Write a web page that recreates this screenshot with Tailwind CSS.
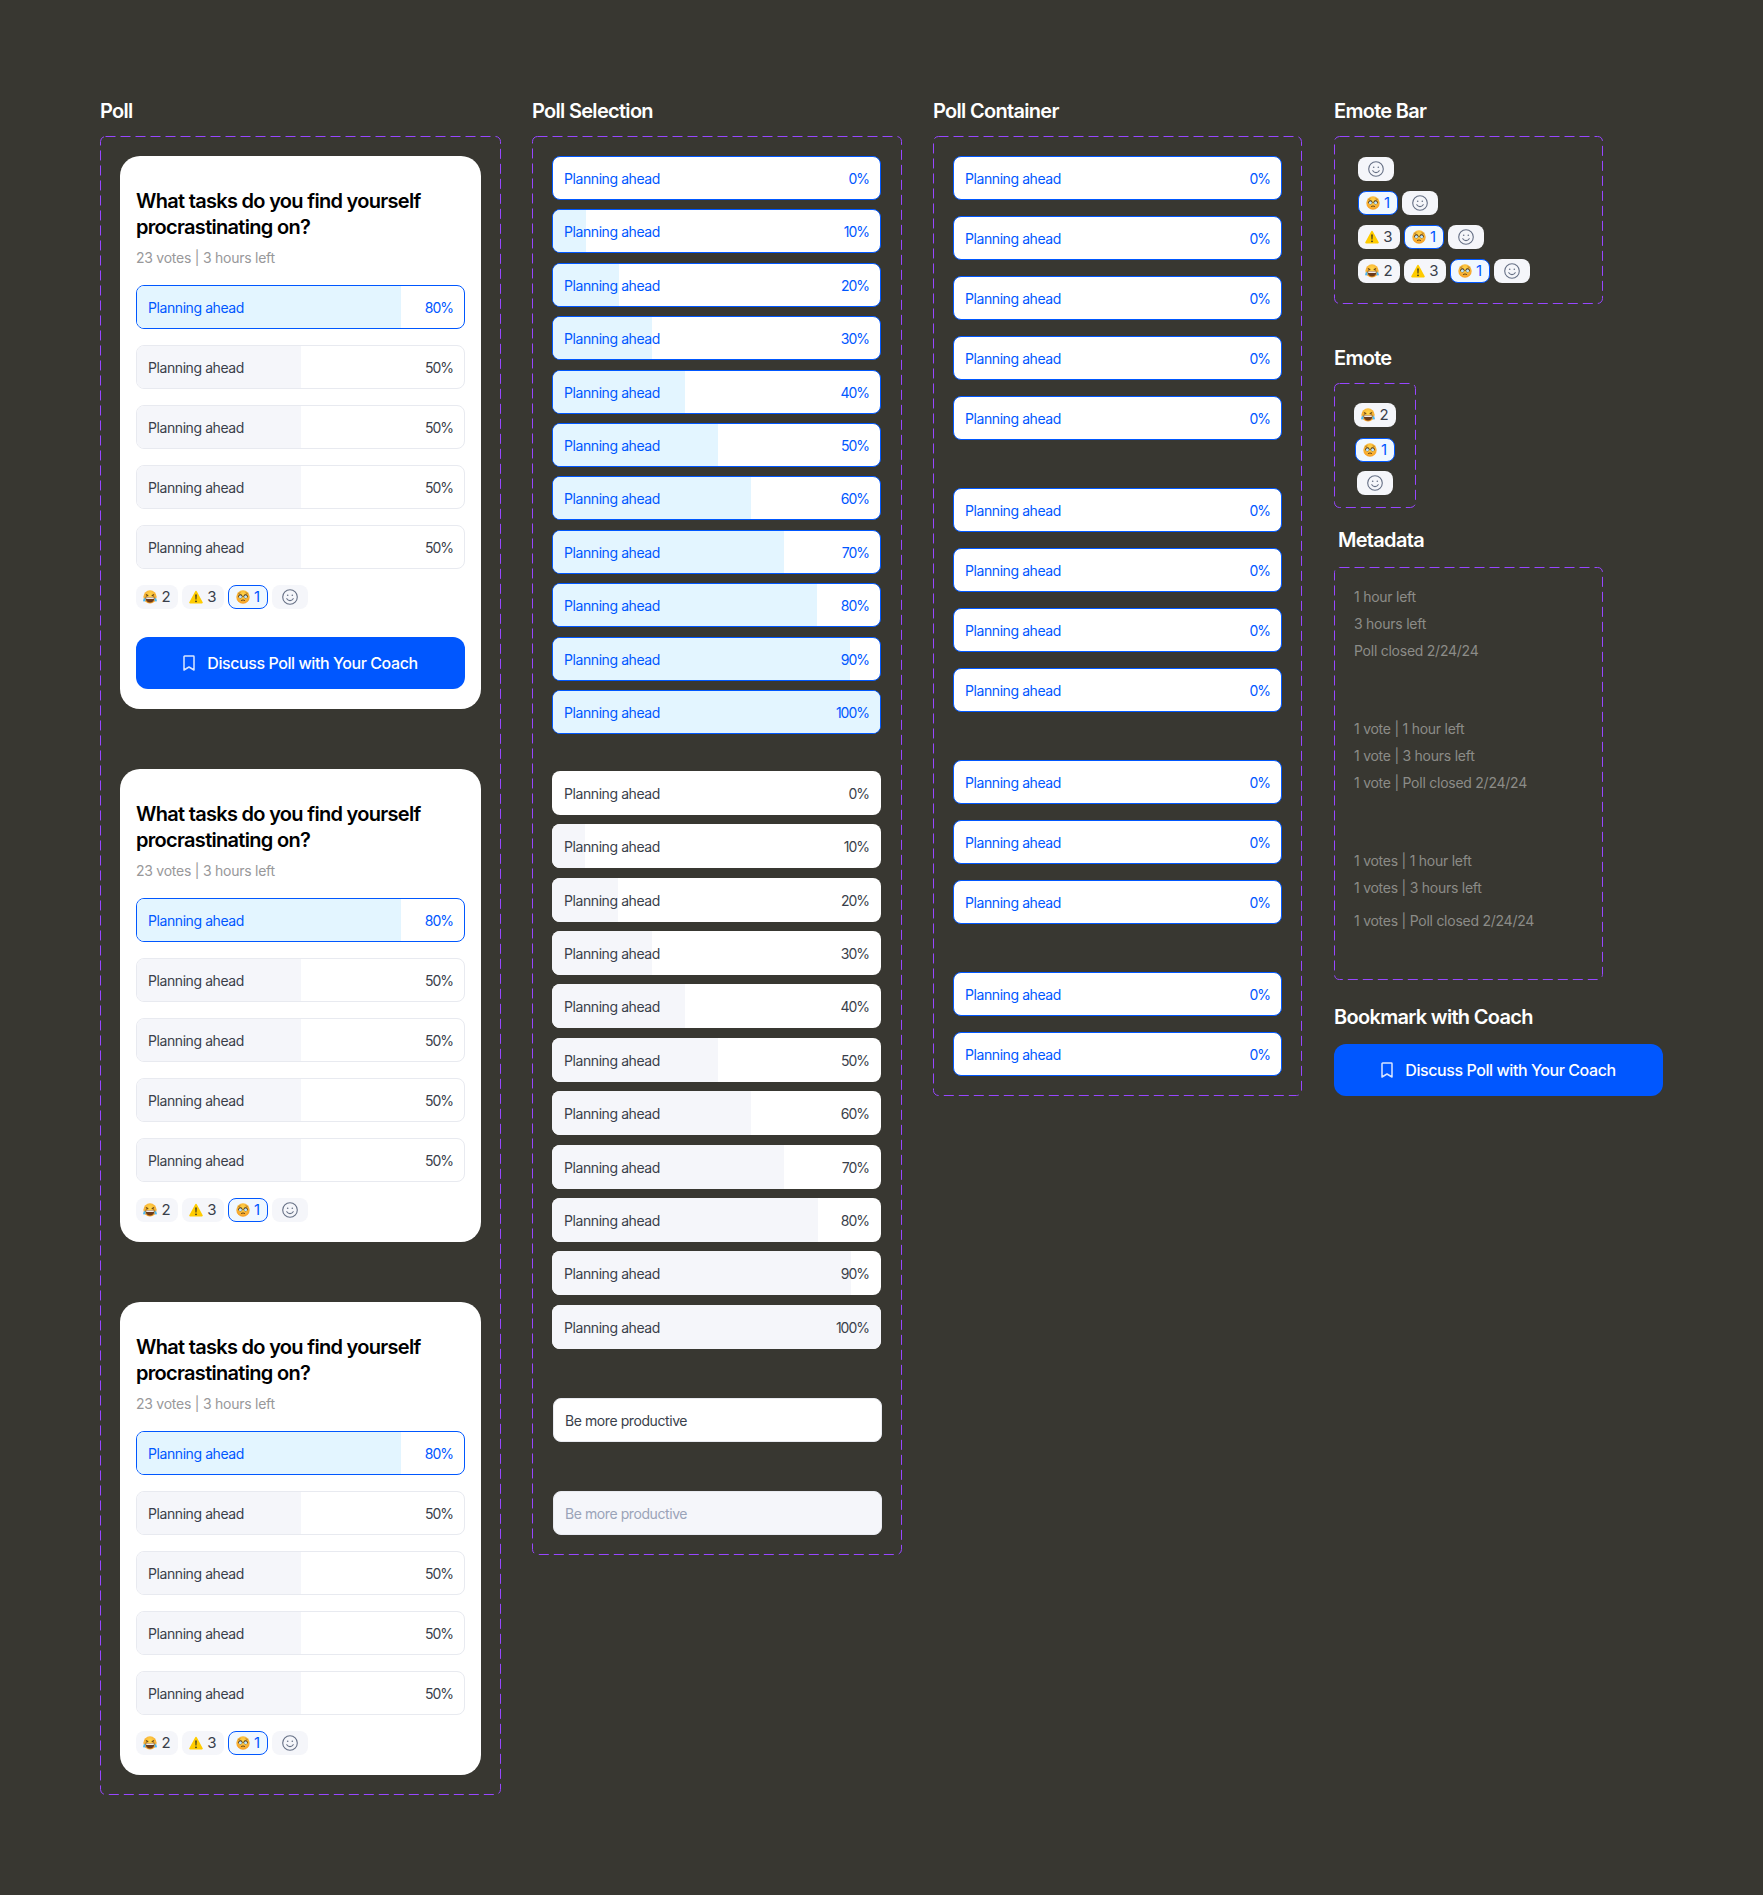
<!DOCTYPE html>
<html><head><meta charset="utf-8"><script src="https://cdn.jsdelivr.net/npm/@tailwindcss/browser@4"></script></head>
<body class="m-0 bg-[#383731]">
<svg class="absolute w-0 h-0"><defs>
<radialGradient id="g" cx="50%" cy="35%" r="70%"><stop offset="0" stop-color="#ffd84d"/><stop offset="1" stop-color="#f59a23"/></radialGradient>
<symbol id="laugh" viewBox="0 0 14 14"><circle cx="7" cy="6.800" r="6.600" fill="url(#g)"/><path d="M2.800 4.400l2.400 1.100-2.400.7M11.200 4.400L8.800 5.500l2.400.7" stroke="#5b3a12" stroke-width=".9" fill="none"/><path d="M2.500 7.300h9c0 3.300-2 5.300-4.500 5.300s-4.500-2-4.500-5.300z" fill="#6b3a1a"/><path d="M3.200 7.500h7.600v1.400H3.200z" fill="#fff"/><path d="M1.700 7.500c-.8 1.300-1.900 2.300-1.500 3.400.4.900 2 .8 2.400-.3.300-1-.4-2-.9-3.100zM12.300 7.500c.8 1.300 1.900 2.300 1.500 3.400-.4.900-2 .8-2.400-.3-.3-1 .4-2 .9-3.100z" fill="#4fb7f0"/></symbol>
<symbol id="warn" viewBox="0 0 14 14"><path d="M7 .8c.4 0 .7.200.9.600l5.800 10.800c.3.600-.1 1.200-.8 1.200H1.100c-.7 0-1.100-.6-.8-1.200L6.100 1.400c.2-.4.500-.6.900-.6z" fill="#ffcc00"/><path d="M6.200 4.400h1.600l-.3 5.200H6.500z" fill="#3a3320"/><circle cx="7" cy="11.300" r=".9" fill="#3a3320"/></symbol>
<symbol id="tear" viewBox="0 0 14 14"><circle cx="7" cy="7" r="6.700" fill="url(#g)"/><circle cx="4.400" cy="6.300" r="2.100" fill="#4a2f14"/><circle cx="9.600" cy="6.300" r="2.100" fill="#4a2f14"/><circle cx="4.400" cy="6.800" r="1.500" fill="#bfe6f7"/><circle cx="9.600" cy="6.800" r="1.500" fill="#bfe6f7"/><path d="M2.400 3.600l2-.8M11.600 3.600l-2-.8" stroke="#8a5a1e" stroke-width=".7"/><path d="M5 10.700c1.200-.9 2.800-.9 4 0" stroke="#5b3a12" stroke-width=".9" fill="none"/></symbol>
<symbol id="smile" viewBox="0 0 16 16"><g fill="none" stroke="#667085" stroke-width="1.100" stroke-linecap="round"><circle cx="8" cy="8" r="7.300"/><path d="M4.800 9.700c.8 1.300 1.900 1.900 3.200 1.900s2.400-.6 3.200-1.900"/></g><circle cx="5.700" cy="6.200" r=".8" fill="#667085"/><circle cx="10.300" cy="6.200" r=".8" fill="#667085"/></symbol>
<symbol id="mark" viewBox="0 0 12 16"><path d="M1 1.700C1 1.300 1.300 1 1.700 1h8.600c.4 0 .7.300.7.700V15l-5-3-5 3z" fill="none" stroke="#fff" stroke-opacity=".85" stroke-width="1.500" stroke-linejoin="round"/></symbol>
</defs></svg>

<main class="flex items-start gap-[31px] h-[1895px] pl-[100px] pt-[99px] font-['Inter',sans-serif]">

<!-- Poll -->
<section class="w-[401px] shrink-0">
<h2 class="h-6 mb-[13px] text-[20px] leading-6 font-semibold tracking-[-0.7px] text-white">Poll</h2>
<div class="relative flex flex-col gap-[60px] p-5 h-[1659px]">
<svg class="absolute inset-0 w-full h-full"><rect x=".5" y=".5" rx="5" class="w-[calc(100%-1px)] h-[calc(100%-1px)] fill-none stroke-[#9747ff] [stroke-dasharray:10_5]"/></svg>

<article class="relative rounded-[20px] bg-white px-4 pt-8 pb-5">
<h3 class="text-[20px] leading-[26px] font-semibold tracking-[-0.7px] text-black">What tasks do you find yourself procrastinating on?</h3>
<p class="mt-2 mb-[17px] text-sm leading-5 tracking-[-0.25px] text-[#98989a]">23 votes | 3 hours left</p>
<div class="flex flex-col gap-4 text-sm tracking-[-0.42px] [&>div]:pt-0.5 [&_span:last-child]:tracking-[-1px]">
<div class="relative flex h-11 items-center justify-between overflow-hidden rounded-lg border border-[#0057ff] bg-white px-[11px] text-[#0057ff]"><div class="absolute inset-y-0 left-0 bg-[#e3f5ff]" style="width:80.7%"></div><span class="relative">Planning ahead</span><span class="relative">80%</span></div>
<div class="relative flex h-11 items-center justify-between overflow-hidden rounded-lg border border-[#e8eaf0] bg-white px-[11px] text-[#3a3f4b]"><div class="absolute inset-y-0 left-0 bg-[#f5f6fa]" style="width:50.2%"></div><span class="relative">Planning ahead</span><span class="relative">50%</span></div>
<div class="relative flex h-11 items-center justify-between overflow-hidden rounded-lg border border-[#e8eaf0] bg-white px-[11px] text-[#3a3f4b]"><div class="absolute inset-y-0 left-0 bg-[#f5f6fa]" style="width:50.2%"></div><span class="relative">Planning ahead</span><span class="relative">50%</span></div>
<div class="relative flex h-11 items-center justify-between overflow-hidden rounded-lg border border-[#e8eaf0] bg-white px-[11px] text-[#3a3f4b]"><div class="absolute inset-y-0 left-0 bg-[#f5f6fa]" style="width:50.2%"></div><span class="relative">Planning ahead</span><span class="relative">50%</span></div>
<div class="relative flex h-11 items-center justify-between overflow-hidden rounded-lg border border-[#e8eaf0] bg-white px-[11px] text-[#3a3f4b]"><div class="absolute inset-y-0 left-0 bg-[#f5f6fa]" style="width:50.2%"></div><span class="relative">Planning ahead</span><span class="relative">50%</span></div>
</div>
<div class="mt-4 flex gap-1 text-[15px]">
<span class="flex h-6 w-[42px] items-center justify-center gap-1 rounded-lg bg-[#f5f6fa] text-[#3a3f4b]"><svg class="size-[14px]"><use href="#laugh"/></svg>2</span>
<span class="flex h-6 w-[42px] items-center justify-center gap-1 rounded-lg bg-[#f5f6fa] text-[#3a3f4b]"><svg class="size-[14px]"><use href="#warn"/></svg>3</span>
<span class="flex h-6 w-10 items-center justify-center gap-1 rounded-lg border border-[#0057ff] bg-[#f0f8ff] text-[#0057ff]"><svg class="size-[14px]"><use href="#tear"/></svg>1</span>
<span class="flex h-6 w-9 items-center justify-center rounded-lg bg-[#f5f6fa]"><svg class="size-4"><use href="#smile"/></svg></span>
</div>
<button class="mt-7 flex h-[52px] w-full items-center justify-center gap-3 rounded-xl bg-[#0057ff] text-base font-medium tracking-[-0.43px] text-white"><svg class="h-4 w-3"><use href="#mark"/></svg>Discuss Poll with Your Coach</button>
</article>

<article class="relative rounded-[20px] bg-white px-4 pt-8 pb-5">
<h3 class="text-[20px] leading-[26px] font-semibold tracking-[-0.7px] text-black">What tasks do you find yourself procrastinating on?</h3>
<p class="mt-2 mb-[17px] text-sm leading-5 tracking-[-0.25px] text-[#98989a]">23 votes | 3 hours left</p>
<div class="flex flex-col gap-4 text-sm tracking-[-0.42px] [&>div]:pt-0.5 [&_span:last-child]:tracking-[-1px]">
<div class="relative flex h-11 items-center justify-between overflow-hidden rounded-lg border border-[#0057ff] bg-white px-[11px] text-[#0057ff]"><div class="absolute inset-y-0 left-0 bg-[#e3f5ff]" style="width:80.7%"></div><span class="relative">Planning ahead</span><span class="relative">80%</span></div>
<div class="relative flex h-11 items-center justify-between overflow-hidden rounded-lg border border-[#e8eaf0] bg-white px-[11px] text-[#3a3f4b]"><div class="absolute inset-y-0 left-0 bg-[#f5f6fa]" style="width:50.2%"></div><span class="relative">Planning ahead</span><span class="relative">50%</span></div>
<div class="relative flex h-11 items-center justify-between overflow-hidden rounded-lg border border-[#e8eaf0] bg-white px-[11px] text-[#3a3f4b]"><div class="absolute inset-y-0 left-0 bg-[#f5f6fa]" style="width:50.2%"></div><span class="relative">Planning ahead</span><span class="relative">50%</span></div>
<div class="relative flex h-11 items-center justify-between overflow-hidden rounded-lg border border-[#e8eaf0] bg-white px-[11px] text-[#3a3f4b]"><div class="absolute inset-y-0 left-0 bg-[#f5f6fa]" style="width:50.2%"></div><span class="relative">Planning ahead</span><span class="relative">50%</span></div>
<div class="relative flex h-11 items-center justify-between overflow-hidden rounded-lg border border-[#e8eaf0] bg-white px-[11px] text-[#3a3f4b]"><div class="absolute inset-y-0 left-0 bg-[#f5f6fa]" style="width:50.2%"></div><span class="relative">Planning ahead</span><span class="relative">50%</span></div>
</div>
<div class="mt-4 flex gap-1 text-[15px]">
<span class="flex h-6 w-[42px] items-center justify-center gap-1 rounded-lg bg-[#f5f6fa] text-[#3a3f4b]"><svg class="size-[14px]"><use href="#laugh"/></svg>2</span>
<span class="flex h-6 w-[42px] items-center justify-center gap-1 rounded-lg bg-[#f5f6fa] text-[#3a3f4b]"><svg class="size-[14px]"><use href="#warn"/></svg>3</span>
<span class="flex h-6 w-10 items-center justify-center gap-1 rounded-lg border border-[#0057ff] bg-[#f0f8ff] text-[#0057ff]"><svg class="size-[14px]"><use href="#tear"/></svg>1</span>
<span class="flex h-6 w-9 items-center justify-center rounded-lg bg-[#f5f6fa]"><svg class="size-4"><use href="#smile"/></svg></span>
</div>
</article>

<article class="relative rounded-[20px] bg-white px-4 pt-8 pb-5">
<h3 class="text-[20px] leading-[26px] font-semibold tracking-[-0.7px] text-black">What tasks do you find yourself procrastinating on?</h3>
<p class="mt-2 mb-[17px] text-sm leading-5 tracking-[-0.25px] text-[#98989a]">23 votes | 3 hours left</p>
<div class="flex flex-col gap-4 text-sm tracking-[-0.42px] [&>div]:pt-0.5 [&_span:last-child]:tracking-[-1px]">
<div class="relative flex h-11 items-center justify-between overflow-hidden rounded-lg border border-[#0057ff] bg-white px-[11px] text-[#0057ff]"><div class="absolute inset-y-0 left-0 bg-[#e3f5ff]" style="width:80.7%"></div><span class="relative">Planning ahead</span><span class="relative">80%</span></div>
<div class="relative flex h-11 items-center justify-between overflow-hidden rounded-lg border border-[#e8eaf0] bg-white px-[11px] text-[#3a3f4b]"><div class="absolute inset-y-0 left-0 bg-[#f5f6fa]" style="width:50.2%"></div><span class="relative">Planning ahead</span><span class="relative">50%</span></div>
<div class="relative flex h-11 items-center justify-between overflow-hidden rounded-lg border border-[#e8eaf0] bg-white px-[11px] text-[#3a3f4b]"><div class="absolute inset-y-0 left-0 bg-[#f5f6fa]" style="width:50.2%"></div><span class="relative">Planning ahead</span><span class="relative">50%</span></div>
<div class="relative flex h-11 items-center justify-between overflow-hidden rounded-lg border border-[#e8eaf0] bg-white px-[11px] text-[#3a3f4b]"><div class="absolute inset-y-0 left-0 bg-[#f5f6fa]" style="width:50.2%"></div><span class="relative">Planning ahead</span><span class="relative">50%</span></div>
<div class="relative flex h-11 items-center justify-between overflow-hidden rounded-lg border border-[#e8eaf0] bg-white px-[11px] text-[#3a3f4b]"><div class="absolute inset-y-0 left-0 bg-[#f5f6fa]" style="width:50.2%"></div><span class="relative">Planning ahead</span><span class="relative">50%</span></div>
</div>
<div class="mt-4 flex gap-1 text-[15px]">
<span class="flex h-6 w-[42px] items-center justify-center gap-1 rounded-lg bg-[#f5f6fa] text-[#3a3f4b]"><svg class="size-[14px]"><use href="#laugh"/></svg>2</span>
<span class="flex h-6 w-[42px] items-center justify-center gap-1 rounded-lg bg-[#f5f6fa] text-[#3a3f4b]"><svg class="size-[14px]"><use href="#warn"/></svg>3</span>
<span class="flex h-6 w-10 items-center justify-center gap-1 rounded-lg border border-[#0057ff] bg-[#f0f8ff] text-[#0057ff]"><svg class="size-[14px]"><use href="#tear"/></svg>1</span>
<span class="flex h-6 w-9 items-center justify-center rounded-lg bg-[#f5f6fa]"><svg class="size-4"><use href="#smile"/></svg></span>
</div>
</article>
</div>
</section>

<!-- Poll Selection -->
<section class="w-[370px] shrink-0">
<h2 class="h-6 mb-[13px] text-[20px] leading-6 font-semibold tracking-[-0.7px] text-white">Poll Selection</h2>
<div class="relative h-[1419px] p-5 text-sm tracking-[-0.42px]">
<svg class="absolute inset-0 w-full h-full"><rect x=".5" y=".5" rx="5" class="w-[calc(100%-1px)] h-[calc(100%-1px)] fill-none stroke-[#9747ff] [stroke-dasharray:10_5]"/></svg>
<div class="relative flex w-[329px] flex-col gap-[9.4px] text-[#0057ff] [&>div]:pt-0.5 [&_span:last-child]:tracking-[-1px]">
<div class="relative flex h-11 items-center justify-between overflow-hidden rounded-lg border border-[#0057ff] bg-white px-[11px]"><span class="relative">Planning ahead</span><span class="relative">0%</span></div>
<div class="relative flex h-11 items-center justify-between overflow-hidden rounded-lg border border-[#0057ff] bg-white px-[11px]"><div class="absolute inset-y-0 left-0 bg-[#e3f5ff]" style="width:10%"></div><span class="relative">Planning ahead</span><span class="relative">10%</span></div>
<div class="relative flex h-11 items-center justify-between overflow-hidden rounded-lg border border-[#0057ff] bg-white px-[11px]"><div class="absolute inset-y-0 left-0 bg-[#e3f5ff]" style="width:20.2%"></div><span class="relative">Planning ahead</span><span class="relative">20%</span></div>
<div class="relative flex h-11 items-center justify-between overflow-hidden rounded-lg border border-[#0057ff] bg-white px-[11px]"><div class="absolute inset-y-0 left-0 bg-[#e3f5ff]" style="width:30.2%"></div><span class="relative">Planning ahead</span><span class="relative">30%</span></div>
<div class="relative flex h-11 items-center justify-between overflow-hidden rounded-lg border border-[#0057ff] bg-white px-[11px]"><div class="absolute inset-y-0 left-0 bg-[#e3f5ff]" style="width:40.3%"></div><span class="relative">Planning ahead</span><span class="relative">40%</span></div>
<div class="relative flex h-11 items-center justify-between overflow-hidden rounded-lg border border-[#0057ff] bg-white px-[11px]"><div class="absolute inset-y-0 left-0 bg-[#e3f5ff]" style="width:50.4%"></div><span class="relative">Planning ahead</span><span class="relative">50%</span></div>
<div class="relative flex h-11 items-center justify-between overflow-hidden rounded-lg border border-[#0057ff] bg-white px-[11px]"><div class="absolute inset-y-0 left-0 bg-[#e3f5ff]" style="width:60.6%"></div><span class="relative">Planning ahead</span><span class="relative">60%</span></div>
<div class="relative flex h-11 items-center justify-between overflow-hidden rounded-lg border border-[#0057ff] bg-white px-[11px]"><div class="absolute inset-y-0 left-0 bg-[#e3f5ff]" style="width:70.7%"></div><span class="relative">Planning ahead</span><span class="relative">70%</span></div>
<div class="relative flex h-11 items-center justify-between overflow-hidden rounded-lg border border-[#0057ff] bg-white px-[11px]"><div class="absolute inset-y-0 left-0 bg-[#e3f5ff]" style="width:80.7%"></div><span class="relative">Planning ahead</span><span class="relative">80%</span></div>
<div class="relative flex h-11 items-center justify-between overflow-hidden rounded-lg border border-[#0057ff] bg-white px-[11px]"><div class="absolute inset-y-0 left-0 bg-[#e3f5ff]" style="width:90.8%"></div><span class="relative">Planning ahead</span><span class="relative">90%</span></div>
<div class="relative flex h-11 items-center justify-between overflow-hidden rounded-lg border border-[#0057ff] bg-white px-[11px]"><div class="absolute inset-y-0 left-0 bg-[#e3f5ff]" style="width:100%"></div><span class="relative">Planning ahead</span><span class="relative">100%</span></div>
</div>
<div class="relative mt-[37px] flex w-[329px] flex-col gap-[9.4px] text-[#3a3f4b] [&>div]:pt-0.5 [&_span:last-child]:tracking-[-1px]">
<div class="relative flex h-11 items-center justify-between overflow-hidden rounded-lg bg-white px-3"><span class="relative">Planning ahead</span><span class="relative">0%</span></div>
<div class="relative flex h-11 items-center justify-between overflow-hidden rounded-lg bg-white px-3"><div class="absolute inset-y-0 left-0 bg-[#f5f6fa]" style="width:10.1%"></div><span class="relative">Planning ahead</span><span class="relative">10%</span></div>
<div class="relative flex h-11 items-center justify-between overflow-hidden rounded-lg bg-white px-3"><div class="absolute inset-y-0 left-0 bg-[#f5f6fa]" style="width:20.2%"></div><span class="relative">Planning ahead</span><span class="relative">20%</span></div>
<div class="relative flex h-11 items-center justify-between overflow-hidden rounded-lg bg-white px-3"><div class="absolute inset-y-0 left-0 bg-[#f5f6fa]" style="width:30.3%"></div><span class="relative">Planning ahead</span><span class="relative">30%</span></div>
<div class="relative flex h-11 items-center justify-between overflow-hidden rounded-lg bg-white px-3"><div class="absolute inset-y-0 left-0 bg-[#f5f6fa]" style="width:40.4%"></div><span class="relative">Planning ahead</span><span class="relative">40%</span></div>
<div class="relative flex h-11 items-center justify-between overflow-hidden rounded-lg bg-white px-3"><div class="absolute inset-y-0 left-0 bg-[#f5f6fa]" style="width:50.5%"></div><span class="relative">Planning ahead</span><span class="relative">50%</span></div>
<div class="relative flex h-11 items-center justify-between overflow-hidden rounded-lg bg-white px-3"><div class="absolute inset-y-0 left-0 bg-[#f5f6fa]" style="width:60.5%"></div><span class="relative">Planning ahead</span><span class="relative">60%</span></div>
<div class="relative flex h-11 items-center justify-between overflow-hidden rounded-lg bg-white px-3"><div class="absolute inset-y-0 left-0 bg-[#f5f6fa]" style="width:70.6%"></div><span class="relative">Planning ahead</span><span class="relative">70%</span></div>
<div class="relative flex h-11 items-center justify-between overflow-hidden rounded-lg bg-white px-3"><div class="absolute inset-y-0 left-0 bg-[#f5f6fa]" style="width:80.7%"></div><span class="relative">Planning ahead</span><span class="relative">80%</span></div>
<div class="relative flex h-11 items-center justify-between overflow-hidden rounded-lg bg-white px-3"><div class="absolute inset-y-0 left-0 bg-[#f5f6fa]" style="width:90.8%"></div><span class="relative">Planning ahead</span><span class="relative">90%</span></div>
<div class="relative flex h-11 items-center justify-between overflow-hidden rounded-lg bg-white px-3"><div class="absolute inset-y-0 left-0 bg-[#f5f6fa]" style="width:100%"></div><span class="relative">Planning ahead</span><span class="relative">100%</span></div>
</div>
<div class="relative ml-px mt-[49px] flex h-11 w-[329px] items-center rounded-lg border border-[#e8eaf0] bg-white px-[11px] pt-0.5 text-[#3a3f4b]">Be more productive</div>
<div class="relative ml-px mt-[49px] flex h-11 w-[329px] items-center rounded-lg border border-[#e8eaf0] bg-[#f5f6fa] px-[11px] pt-0.5 text-[#9aa3b8]">Be more productive</div>
</div>
</section>

<!-- Poll Container -->
<section class="w-[369px] shrink-0">
<h2 class="h-6 mb-[13px] text-[20px] leading-6 font-semibold tracking-[-0.7px] text-white">Poll Container</h2>
<div class="relative flex h-[960px] flex-col gap-12 p-5 text-sm tracking-[-0.42px] text-[#0057ff] [&_div_div]:pt-0.5 [&_span:last-child]:tracking-[-1px]">
<svg class="absolute inset-0 w-full h-full"><rect x=".5" y=".5" rx="5" class="w-[calc(100%-1px)] h-[calc(100%-1px)] fill-none stroke-[#9747ff] [stroke-dasharray:10_5]"/></svg>
<div class="relative flex flex-col gap-4">
<div class="flex h-11 w-[329px] items-center justify-between rounded-lg border border-[#0057ff] bg-white px-[11px]"><span>Planning ahead</span><span>0%</span></div>
<div class="flex h-11 w-[329px] items-center justify-between rounded-lg border border-[#0057ff] bg-white px-[11px]"><span>Planning ahead</span><span>0%</span></div>
<div class="flex h-11 w-[329px] items-center justify-between rounded-lg border border-[#0057ff] bg-white px-[11px]"><span>Planning ahead</span><span>0%</span></div>
<div class="flex h-11 w-[329px] items-center justify-between rounded-lg border border-[#0057ff] bg-white px-[11px]"><span>Planning ahead</span><span>0%</span></div>
<div class="flex h-11 w-[329px] items-center justify-between rounded-lg border border-[#0057ff] bg-white px-[11px]"><span>Planning ahead</span><span>0%</span></div>
</div>
<div class="relative flex flex-col gap-4">
<div class="flex h-11 w-[329px] items-center justify-between rounded-lg border border-[#0057ff] bg-white px-[11px]"><span>Planning ahead</span><span>0%</span></div>
<div class="flex h-11 w-[329px] items-center justify-between rounded-lg border border-[#0057ff] bg-white px-[11px]"><span>Planning ahead</span><span>0%</span></div>
<div class="flex h-11 w-[329px] items-center justify-between rounded-lg border border-[#0057ff] bg-white px-[11px]"><span>Planning ahead</span><span>0%</span></div>
<div class="flex h-11 w-[329px] items-center justify-between rounded-lg border border-[#0057ff] bg-white px-[11px]"><span>Planning ahead</span><span>0%</span></div>
</div>
<div class="relative flex flex-col gap-4">
<div class="flex h-11 w-[329px] items-center justify-between rounded-lg border border-[#0057ff] bg-white px-[11px]"><span>Planning ahead</span><span>0%</span></div>
<div class="flex h-11 w-[329px] items-center justify-between rounded-lg border border-[#0057ff] bg-white px-[11px]"><span>Planning ahead</span><span>0%</span></div>
<div class="flex h-11 w-[329px] items-center justify-between rounded-lg border border-[#0057ff] bg-white px-[11px]"><span>Planning ahead</span><span>0%</span></div>
</div>
<div class="relative flex flex-col gap-4">
<div class="flex h-11 w-[329px] items-center justify-between rounded-lg border border-[#0057ff] bg-white px-[11px]"><span>Planning ahead</span><span>0%</span></div>
<div class="flex h-11 w-[329px] items-center justify-between rounded-lg border border-[#0057ff] bg-white px-[11px]"><span>Planning ahead</span><span>0%</span></div>
</div>
</div>
</section>

<!-- Right column -->
<section class="w-[329px] shrink-0 ml-px">
<h2 class="h-6 mb-[13px] text-[20px] leading-6 font-semibold tracking-[-0.7px] text-white">Emote Bar</h2>
<div class="relative flex h-[168px] w-[269px] flex-col gap-[10px] pl-6 pt-[21px] text-[15px]">
<svg class="absolute inset-0 w-full h-full"><rect x=".5" y=".5" rx="5" class="w-[calc(100%-1px)] h-[calc(100%-1px)] fill-none stroke-[#9747ff] [stroke-dasharray:10_5]"/></svg>
<div class="relative flex gap-1">
<span class="flex h-6 w-9 items-center justify-center rounded-lg bg-[#f5f6fa]"><svg class="size-4"><use href="#smile"/></svg></span>
</div>
<div class="relative flex gap-1">
<span class="flex h-6 w-10 items-center justify-center gap-1 rounded-lg border border-[#0057ff] bg-[#f0f8ff] text-[#0057ff]"><svg class="size-[14px]"><use href="#tear"/></svg>1</span>
<span class="flex h-6 w-9 items-center justify-center rounded-lg bg-[#f5f6fa]"><svg class="size-4"><use href="#smile"/></svg></span>
</div>
<div class="relative flex gap-1">
<span class="flex h-6 w-[42px] items-center justify-center gap-1 rounded-lg bg-[#f5f6fa] text-[#3a3f4b]"><svg class="size-[14px]"><use href="#warn"/></svg>3</span>
<span class="flex h-6 w-10 items-center justify-center gap-1 rounded-lg border border-[#0057ff] bg-[#f0f8ff] text-[#0057ff]"><svg class="size-[14px]"><use href="#tear"/></svg>1</span>
<span class="flex h-6 w-9 items-center justify-center rounded-lg bg-[#f5f6fa]"><svg class="size-4"><use href="#smile"/></svg></span>
</div>
<div class="relative flex gap-1">
<span class="flex h-6 w-[42px] items-center justify-center gap-1 rounded-lg bg-[#f5f6fa] text-[#3a3f4b]"><svg class="size-[14px]"><use href="#laugh"/></svg>2</span>
<span class="flex h-6 w-[42px] items-center justify-center gap-1 rounded-lg bg-[#f5f6fa] text-[#3a3f4b]"><svg class="size-[14px]"><use href="#warn"/></svg>3</span>
<span class="flex h-6 w-10 items-center justify-center gap-1 rounded-lg border border-[#0057ff] bg-[#f0f8ff] text-[#0057ff]"><svg class="size-[14px]"><use href="#tear"/></svg>1</span>
<span class="flex h-6 w-9 items-center justify-center rounded-lg bg-[#f5f6fa]"><svg class="size-4"><use href="#smile"/></svg></span>
</div>
</div>

<h2 class="mt-[42px] h-6 mb-[13px] text-[20px] leading-6 font-semibold tracking-[-0.7px] text-white">Emote</h2>
<div class="relative flex h-[125px] w-[82px] flex-col items-center gap-[10px] pt-5 text-[15px]">
<svg class="absolute inset-0 w-full h-full"><rect x=".5" y=".5" rx="5" class="w-[calc(100%-1px)] h-[calc(100%-1px)] fill-none stroke-[#9747ff] [stroke-dasharray:10_5]"/></svg>
<span class="relative flex h-6 w-[42px] items-center justify-center gap-1 rounded-lg bg-[#f5f6fa] text-[#3a3f4b]"><svg class="size-[14px]"><use href="#laugh"/></svg>2</span>
<span class="relative mt-px flex h-6 w-10 items-center justify-center gap-1 rounded-lg border border-[#0057ff] bg-[#f0f8ff] text-[#0057ff]"><svg class="size-[14px]"><use href="#tear"/></svg>1</span>
<span class="relative -mt-px -ml-px flex h-6 w-9 items-center justify-center rounded-lg bg-[#f5f6fa]"><svg class="size-4"><use href="#smile"/></svg></span>
</div>

<h2 class="ml-1 mt-5 h-6 mb-[15px] text-[20px] leading-6 font-semibold tracking-[-0.7px] text-white">Metadata</h2>
<div class="relative h-[413px] w-[269px] pl-5 pt-5 text-sm leading-5 tracking-[-0.25px] text-[#8c8c88]">
<svg class="absolute inset-0 w-full h-full"><rect x=".5" y=".5" rx="5" class="w-[calc(100%-1px)] h-[calc(100%-1px)] fill-none stroke-[#9747ff] [stroke-dasharray:10_5]"/></svg>
<div class="flex flex-col gap-[7px]"><p>1 hour left</p><p>3 hours left</p><p>Poll closed 2/24/24</p></div>
<div class="mt-[58px] flex flex-col gap-[7px]"><p>1 vote | 1 hour left</p><p>1 vote | 3 hours left</p><p>1 vote | Poll closed 2/24/24</p></div>
<div class="mt-[58px] flex flex-col gap-[7px]"><p>1 votes | 1 hour left</p><p>1 votes | 3 hours left</p><p class="mt-[6px]">1 votes | Poll closed 2/24/24</p></div>
</div>

<h2 class="mt-[25px] h-6 mb-[15px] text-[20px] leading-6 font-semibold tracking-[-0.7px] text-white">Bookmark with Coach</h2>
<button class="flex h-[52px] w-[329px] items-center justify-center gap-3 rounded-xl bg-[#0057ff] text-base font-medium tracking-[-0.43px] text-white"><svg class="h-4 w-3"><use href="#mark"/></svg>Discuss Poll with Your Coach</button>
</section>
</main>
</body></html>
